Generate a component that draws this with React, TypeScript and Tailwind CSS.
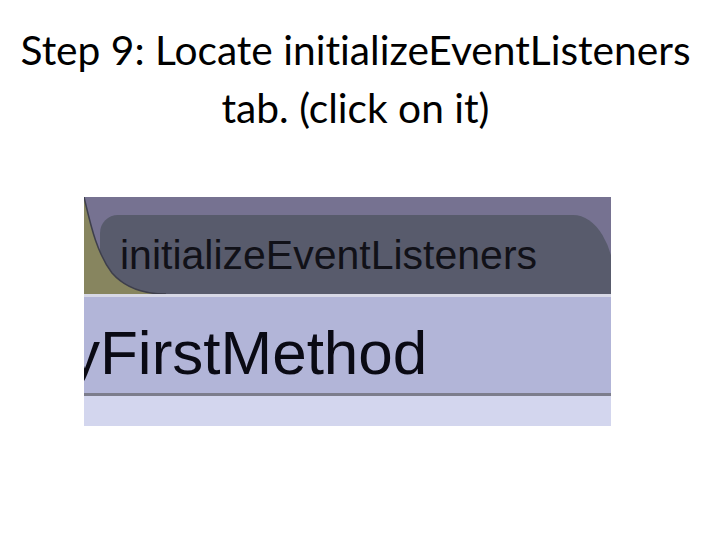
export default function App() {
  return (
    <div className="w-[720px] h-[540px] bg-white flex flex-col overflow-hidden">
      {/* slide title */}
      <h1 className="mt-[21px] pr-[9px] text-center text-black text-[40.7px] leading-[58px] font-['Lato',sans-serif] [font-variant-ligatures:none]">
        Step 9: Locate initializeEventListeners
        <br />
        tab. (click on it)
      </h1>

      {/* cropped screenshot of the tab bar */}
      <div className="mt-[60px] ml-[84px] w-[527px] flex flex-col overflow-hidden font-['Liberation_Sans',Arial,sans-serif]">
        <div className="relative h-[97px] bg-[#767291] flex items-end overflow-hidden">
          <div className="ml-[16px] w-[515px] h-[79px] shrink-0 bg-[#585b6c] rounded-tl-[18px] rounded-tr-[42px_70px] pl-[20px] pt-[20px]">
            <span className="block text-[41px] leading-[41px] text-[#111118] whitespace-nowrap">
              initializeEventListeners
            </span>
          </div>
          <svg className="absolute left-0 top-0" width="90" height="97" viewBox="0 0 90 97">
            <path d="M0,0 C6,25 12,55 28,76 C42,92 62,97 82,97 L0,97 Z" fill="#87855f" />
            <path d="M0,0 C6,25 12,55 28,76 C42,92 62,97 82,97" fill="none" stroke="#3e3f4c" strokeWidth="1.5" />
          </svg>
        </div>
        <div className="h-[3px] bg-[#d7d8e6]" />
        <div className="h-[96px] bg-[#b2b5d8] pt-[25px] overflow-hidden">
          <span className="block ml-[-15px] text-[62px] leading-[62px] text-[#0a0a14] whitespace-nowrap">
            yFirstMethod
          </span>
        </div>
        <div className="h-[3px] bg-[#7c7d8c]" />
        <div className="h-[30px] bg-[#d3d6ee]" />
      </div>
    </div>
  );
}
